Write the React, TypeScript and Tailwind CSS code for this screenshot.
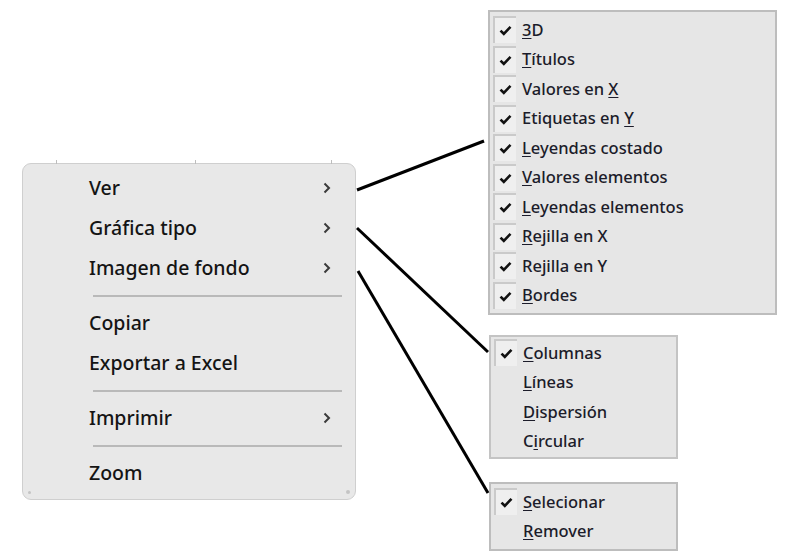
import React from "react";

type Item = { label: React.ReactNode; arrow?: boolean } | "sep";

const mainItems: Item[] = [
  { label: "Ver", arrow: true },
  { label: "Gráfica tipo", arrow: true },
  { label: "Imagen de fondo", arrow: true },
  "sep",
  { label: "Copiar" },
  { label: "Exportar a Excel" },
  "sep",
  { label: "Imprimir", arrow: true },
  "sep",
  { label: "Zoom" },
];

const u = (s: string) => <span className="underline underline-offset-2">{s}</span>;

const verItems: React.ReactNode[] = [
  <>{u("3")}D</>,
  <>{u("T")}ítulos</>,
  <>Valores en {u("X")}</>,
  <>Etiquetas en {u("Y")}</>,
  <>{u("L")}eyendas costado</>,
  <>{u("V")}alores elementos</>,
  <>{u("L")}eyendas elementos</>,
  <>{u("R")}ejilla en X</>,
  <>Rejilla en Y</>,
  <>{u("B")}ordes</>,
];

const tipoItems: React.ReactNode[] = [
  <>{u("C")}olumnas</>,
  <>{u("L")}íneas</>,
  <>{u("D")}ispersión</>,
  <>C{u("i")}rcular</>,
];

const fondoItems: React.ReactNode[] = [
  <>{u("S")}elecionar</>,
  <>{u("R")}emover</>,
];

function Check() {
  return (
    <svg width="13" height="11" viewBox="0 0 13 11">
      <path d="M1.5 5.6 L4.8 8.8 L11.5 1.8" fill="none" stroke="#111" strokeWidth="2.6" />
    </svg>
  );
}

function Chevron() {
  return (
    <svg width="8" height="12" viewBox="0 0 8 12">
      <path d="M1.5 1.5 L6 6 L1.5 10.5" fill="none" stroke="#3a3a3a" strokeWidth="2" />
    </svg>
  );
}

function SubRow({ label, checked }: { label: React.ReactNode; checked: boolean }) {
  return (
    <div className="flex items-center h-[29.5px]">
      <div
        className={
          "w-[23px] h-[27px] ml-[3px] flex items-center justify-center " +
          (checked ? "bg-[#efefef] border-l-2 border-t-2 border-[#cacaca]" : "")
        }
      >
        {checked && <Check />}
      </div>
      <span className="ml-[6px] text-[16.5px] font-medium text-[#1c1c2a] leading-none">{label}</span>
    </div>
  );
}

export default function App() {
  return (
    <div
      className="relative w-[809px] h-[558px] bg-white overflow-hidden"
      style={{ fontFamily: '"Noto Sans", "Open Sans", sans-serif' }}
    >
      {/* main context menu */}
      <div className="absolute left-[22px] top-[163px] w-[334px] h-[337px] bg-[#e8e8e8] border border-[#cfcfcf] rounded-[9px] py-[4px]">
        {mainItems.map((it, i) =>
          it === "sep" ? (
            <div key={i} className="h-[15px] flex items-center pl-[70px] pr-[13px]">
              <div className="h-[2px] w-full bg-[#b9b9b9]" />
            </div>
          ) : (
            <div key={i} className="h-[40px] flex items-center pl-[66px] pr-[24px] text-[19.5px] font-medium text-[#141414]">
              <span className="flex-1">{it.label}</span>
              {it.arrow && <Chevron />}
            </div>
          )
        )}
        <div className="absolute left-[5px] bottom-[5px] w-[3px] h-[3px] rounded-full bg-[#c4c4c4]" />
        <div className="absolute right-[5px] bottom-[5px] w-[4px] h-[4px] rounded-full bg-[#c4c4c4]" />
      </div>

      {/* tick marks over the top edge */}
      <div className="absolute left-[56px] top-[160px] w-px h-[4px] bg-[#bdbdbd]" />
      <div className="absolute left-[195px] top-[160px] w-px h-[4px] bg-[#bdbdbd]" />
      <div className="absolute left-[331px] top-[160px] w-px h-[4px] bg-[#bdbdbd]" />

      {/* Ver submenu */}
      <div className="absolute left-[488px] top-[10px] w-[289px] bg-[#e6e6e6] border-2 border-[#bdbdbd] pt-[3px] pb-[3px]">
        {verItems.map((l, i) => (
          <SubRow key={i} label={l} checked />
        ))}
      </div>

      {/* Gráfica tipo submenu */}
      <div className="absolute left-[489px] top-[335px] w-[189px] bg-[#e6e6e6] border-2 border-[#c4c4c4] py-[1px]">
        {tipoItems.map((l, i) => (
          <SubRow key={i} label={l} checked={i === 0} />
        ))}
      </div>

      {/* Imagen de fondo submenu */}
      <div className="absolute left-[489px] top-[482px] w-[189px] bg-[#e6e6e6] border-2 border-[#bdbdbd] py-[3px]">
        {fondoItems.map((l, i) => (
          <SubRow key={i} label={l} checked={i === 0} />
        ))}
      </div>

      {/* connector lines */}
      <svg className="absolute left-0 top-0" width="809" height="558">
        <line x1="357" y1="190" x2="484" y2="141" stroke="#000" strokeWidth="3" />
        <line x1="357" y1="228" x2="488" y2="352" stroke="#000" strokeWidth="3" />
        <line x1="358" y1="271" x2="488" y2="493" stroke="#000" strokeWidth="3" />
      </svg>
    </div>
  );
}
